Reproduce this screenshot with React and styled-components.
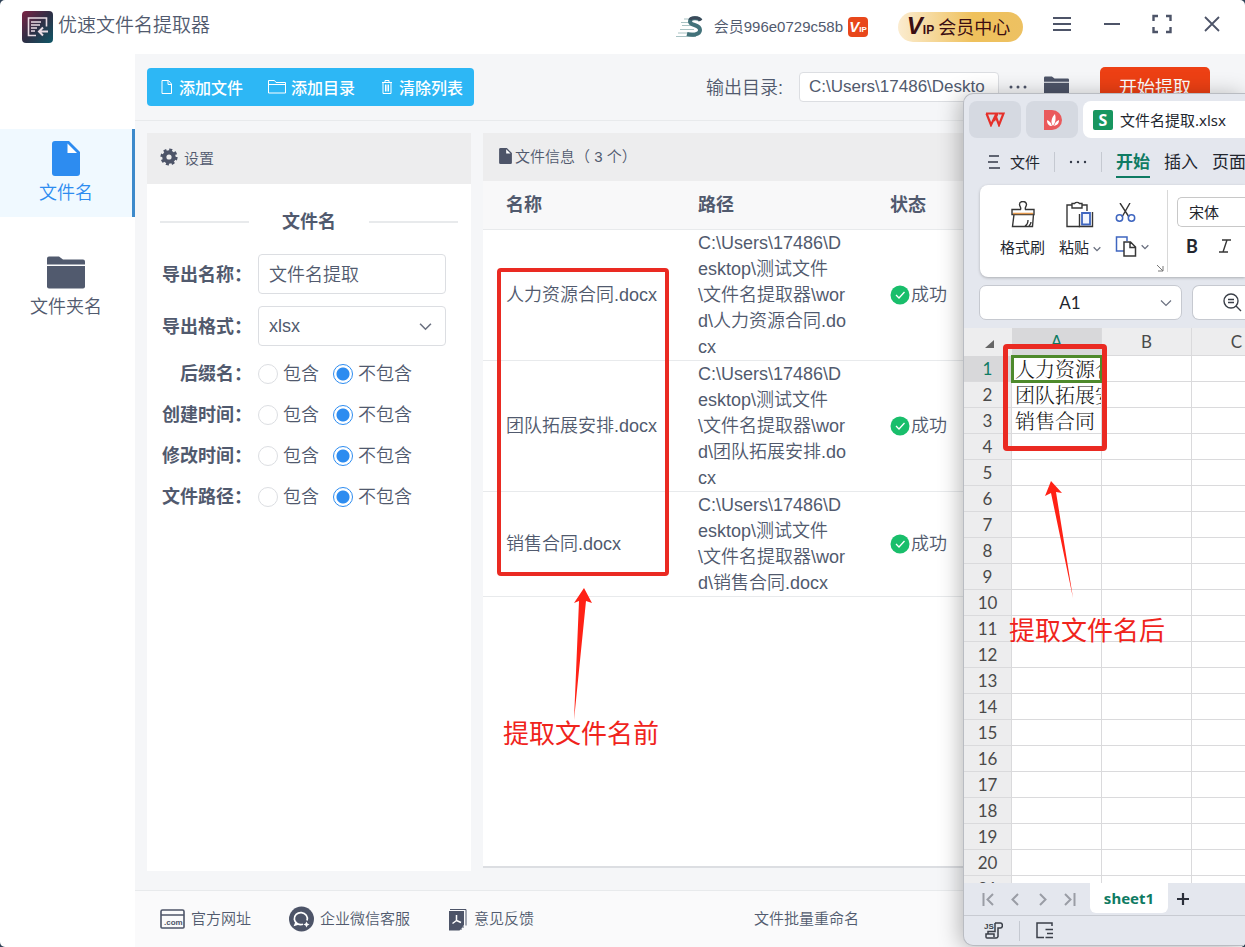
import React from 'react';
import styled, { createGlobalStyle } from 'styled-components';

const FILES = [
  { name: '人力资源合同.docx', path: 'C:\\Users\\17486\\Desktop\\测试文件\\文件名提取器\\word\\人力资源合同.docx' },
  { name: '团队拓展安排.docx', path: 'C:\\Users\\17486\\Desktop\\测试文件\\文件名提取器\\word\\团队拓展安排.docx' },
  { name: '销售合同.docx', path: 'C:\\Users\\17486\\Desktop\\测试文件\\文件名提取器\\word\\销售合同.docx' },
];

const RADIOS = [
  { id: 'suffix', label: '后缀名' },
  { id: 'created', label: '创建时间' },
  { id: 'modified', label: '修改时间' },
  { id: 'filepath', label: '文件路径' },
];

const CELLS = ['人力资源合同', '团队拓展安排', '销售合同'];
const ROWS = Array.from({ length: 21 }, (_, i) => i + 1);

function FileIcon({ w, h }) {
  return (
    <svg width={w} height={h} viewBox="0 0 28 35" fill="currentColor" aria-hidden="true">
      <path d="M3 0h14l11 11v21a3 3 0 0 1-3 3H3a3 3 0 0 1-3-3V3a3 3 0 0 1 3-3z" />
      <path d="M15.500 2.500v9.500h9.500z" fill="#fff" />
    </svg>
  );
}

function FolderIcon({ w, h }) {
  return (
    <svg width={w} height={h} viewBox="0 0 38 32" fill="currentColor" aria-hidden="true">
      <path d="M0 8V2a2 2 0 0 1 2-2h10l4 3h20a2 2 0 0 1 2 2v3z" />
      <path d="M0 9.500h38V30a2 2 0 0 1-2 2H2a2 2 0 0 1-2-2z" />
    </svg>
  );
}

function Chevron({ size = 12, width = 1.5 }) {
  return (
    <svg width={size} height={size} viewBox="0 0 12 12" fill="none" stroke="#6b7180" strokeWidth={width} aria-hidden="true">
      <path d="M1 3.500l5 5 5-5" />
    </svg>
  );
}

function Header() {
  return (
    <TopBar>
      <svg width="31" height="32" viewBox="0 0 31 32" aria-hidden="true">
        <defs>
          <linearGradient id="logo" x1="0" y1="0" x2="1" y2="1">
            <stop offset="0" stopColor="#7c2345" />
            <stop offset="0.5" stopColor="#2e2f45" />
            <stop offset="1" stopColor="#0f5868" />
          </linearGradient>
        </defs>
        <rect width="31" height="32" rx="4" fill="url(#logo)" />
        <g fill="none" stroke="#e9dce4" strokeWidth="1.6">
          <path d="M14 24.500H6.500V7H24.500v8.500" />
          <path d="M9 11h10M9 14h9M9 17h6M9 20h4" strokeWidth="1.3" />
          <path d="M26 20.500h-8.500M21 16.500l-4 4 4 4" strokeWidth="2" />
        </g>
      </svg>
      <AppTitle>优速文件名提取器</AppTitle>
      <Account>
        <svg width="28" height="24" viewBox="0 0 28 24" aria-hidden="true">
          <path d="M8 4h10M5 7.500h9M6 10.500h10M4 14.500h14M2 18h16M0 21.500h20" stroke="#a9c3c4" strokeWidth="1.200" />
          <path d="M24.500 5.500C23 2.500 14 2 14 6.500c0 4.500 10 2.500 10 8.500 0 5.500-9 5-13 4" fill="none" stroke="#42727a" strokeWidth="4" />
          <path d="M14 5c1-3 9-3 11 .5" fill="none" stroke="#3b4a5a" strokeWidth="3" />
        </svg>
        <span>会员996e0729c58b</span>
        <VipBadge><b>V</b><small>IP</small></VipBadge>
      </Account>
      <VipButton type="button"><VipMark><b>V</b><small>IP</small></VipMark>会员中心</VipButton>
      <WindowButtons>
        <IconButton type="button" aria-label="菜单">
          <svg width="20" height="20" viewBox="0 0 20 20" stroke="currentColor" strokeWidth="2"><path d="M1 4h18M1 10h18M1 16h18" /></svg>
        </IconButton>
        <IconButton type="button" aria-label="最小化">
          <svg width="20" height="20" viewBox="0 0 20 20" stroke="currentColor" strokeWidth="2"><path d="M2 10h16" /></svg>
        </IconButton>
        <IconButton type="button" aria-label="全屏">
          <svg width="20" height="20" viewBox="0 0 20 20" fill="none" stroke="currentColor" strokeWidth="2.400"><path d="M1.500 7V2H6M14 2h4.500v5M18.500 13v5H14M6 18H1.500v-5" /></svg>
        </IconButton>
        <IconButton type="button" aria-label="关闭">
          <svg width="20" height="20" viewBox="0 0 20 20" stroke="currentColor" strokeWidth="1.800"><path d="M3 3l14 14M17 3L3 17" /></svg>
        </IconButton>
      </WindowButtons>
    </TopBar>
  );
}

function Toolbar() {
  return (
    <ToolRow>
      <ToolGroup>
        <ToolButton type="button">
          <svg width="14" height="16" viewBox="0 0 14 16" fill="none" stroke="currentColor"><path d="M2 1.500h6.500l3 3.500v9.500H2zM8 1.500V5.500h3.500" /></svg>
          添加文件
        </ToolButton>
        <ToolButton type="button">
          <svg width="18" height="16" viewBox="0 0 18 16" fill="none" stroke="currentColor"><path d="M.5 14V1.500h6l1.500 2h9.500V14zM.5 5.500h17" /></svg>
          添加目录
        </ToolButton>
        <ToolButton type="button">
          <svg width="14" height="16" viewBox="0 0 14 16" fill="none" stroke="currentColor"><path d="M2 3.500h10M5 3V1.500h4V3M3 4v10.500h8V4M5.500 5.500v7M7 5.500v7M8.500 5.500v7" /></svg>
          清除列表
        </ToolButton>
      </ToolGroup>
      <OutLabel htmlFor="outdir">输出目录:</OutLabel>
      <OutInput id="outdir" defaultValue="C:\Users\17486\Deskto" />
      <MoreButton type="button" aria-label="更多">
        <svg width="18" height="4" viewBox="0 0 18 4" fill="currentColor"><circle cx="2" cy="2" r="1.500" /><circle cx="9" cy="2" r="1.500" /><circle cx="16" cy="2" r="1.500" /></svg>
      </MoreButton>
      <IconButton type="button" aria-label="打开目录"><FolderIcon w={25} h={22} /></IconButton>
      <StartButton type="button">开始提取</StartButton>
    </ToolRow>
  );
}

function Settings() {
  return (
    <SettingsPanel>
      <PanelHead $tall>
        <svg width="18" height="18" viewBox="0 0 18 18" aria-hidden="true">
          <circle cx="9" cy="9" r="4.700" fill="none" stroke="#4d5468" strokeWidth="4.200" />
          <circle cx="9" cy="9" r="7.300" fill="none" stroke="#4d5468" strokeWidth="2.600" strokeDasharray="3 2.730" />
        </svg>
        设置
      </PanelHead>
      <Form>
        <SectionTitle>文件名</SectionTitle>
        <Field>
          <FieldLabel htmlFor="exportName">导出名称：</FieldLabel>
          <TextInput id="exportName" defaultValue="文件名提取" />
        </Field>
        <Field>
          <FieldLabel htmlFor="exportType">导出格式：</FieldLabel>
          <SelectBox>
            <Select id="exportType" defaultValue="xlsx"><option>xlsx</option></Select>
            <Chevron size={13} />
          </SelectBox>
        </Field>
        <RadioList>
          {RADIOS.map((r) => (
            <RadioField key={r.id}>
              <FieldLabel as="span" id={r.id}>{r.label}：</FieldLabel>
              <RadioGroup role="radiogroup" aria-labelledby={r.id}>
                <RadioLabel><Radio type="radio" name={r.id} />包含</RadioLabel>
                <RadioLabel><Radio type="radio" name={r.id} defaultChecked />不包含</RadioLabel>
              </RadioGroup>
            </RadioField>
          ))}
        </RadioList>
      </Form>
    </SettingsPanel>
  );
}

function FileList() {
  return (
    <FilesPanel>
      <PanelHead>
        <HeadFile><FileIcon w={13} h={16} /></HeadFile>
        文件信息（ 3 个）
      </PanelHead>
      <FileTable>
        <colgroup><col width="192" /><col width="192" /><col /></colgroup>
        <thead>
          <tr><th>名称</th><th>路径</th><th>状态</th></tr>
        </thead>
        <tbody>
          {FILES.map((f) => (
            <tr key={f.name}>
              <td>{f.name}</td>
              <td>{f.path}</td>
              <td>
                <Status>
                  <svg width="20" height="20" viewBox="0 0 20 20" aria-hidden="true">
                    <circle cx="10" cy="10" r="9.500" fill="#19be6b" />
                    <path d="M6 10l3 3 5.500-6" fill="none" stroke="#fff" strokeWidth="1.300" />
                  </svg>
                  成功
                </Status>
              </td>
            </tr>
          ))}
        </tbody>
      </FileTable>
      <BeforeBox />
      <BeforeArrow width="40" height="132" viewBox="0 0 40 132" aria-hidden="true">
        <path d="M20 0l8 15-6-2-12 119L15 13l-5 2z" fill="#ff2216" />
      </BeforeArrow>
      <BeforeNote>提取文件名前</BeforeNote>
    </FilesPanel>
  );
}

function Footer() {
  return (
    <FooterBar>
      <FootLink href="#site">
        <svg width="25" height="20" viewBox="0 0 25 20" aria-hidden="true">
          <path d="M1 2.500a1.500 1.500 0 0 1 1.500-1.500h20A1.500 1.500 0 0 1 24 2.500V18a1 1 0 0 1-1 1H2a1 1 0 0 1-1-1zM1 6h23" fill="none" stroke="#4d5468" strokeWidth="1.600" />
          <text x="4" y="16" fontSize="8" fontWeight="bold" fontFamily="Liberation Sans" fill="#4d5468">.com</text>
        </svg>
        官方网址
      </FootLink>
      <FootLink href="#service">
        <svg width="25" height="26" viewBox="0 0 25 26" aria-hidden="true">
          <circle cx="12.500" cy="13" r="12.500" fill="#4d5468" />
          <path d="M18 14.500a6.500 6 0 1 0-4 3.800M7 16.500L6 19l3.500-1" fill="none" stroke="#fff" strokeWidth="1.700" />
          <path d="M17.500 15.500l1 2 2 1-2 1-1 2-1-2-2-1 2-1z" fill="#fff" />
        </svg>
        企业微信客服
      </FootLink>
      <FootLink href="#feedback">
        <svg width="20" height="23" viewBox="0 0 20 23" aria-hidden="true">
          <path d="M2 1.500h16v16" fill="none" stroke="#4d5468" />
          <path d="M1 3h15v14l-4.500 5.500H1z" fill="#4d5468" />
          <path d="M8.500 7v5.500M8.500 12.500l-4 3M8.500 12.500l4.500 2" stroke="#fff" strokeWidth="1.500" />
          <path d="M13 22v-3h3" fill="none" stroke="#4d5468" />
        </svg>
        意见反馈
      </FootLink>
      <FootLink href="#rename" $push>文件批量重命名</FootLink>
    </FooterBar>
  );
}

function Spreadsheet() {
  return (
    <SheetWindow>
      <TabStrip>
        <DocTab type="button" aria-label="WPS">
          <svg width="20" height="15" viewBox="0 0 20 15" fill="none" stroke="#e5302a" strokeWidth="2.200"><path d="M1 1.500h11.500L9 9M1.500 1.500L6 13l4.500-9.500L14 13l4.500-11.500h-4.500" /></svg>
        </DocTab>
        <DocTab type="button" aria-label="稻壳">
          <svg width="19" height="20" viewBox="0 0 19 20"><path d="M1 0h8a10 10 0 0 1 0 20H1z" fill="#ea5a5c" /><path d="M10 16C7 12 9 7 12 4c1 4 1 8-2 12zM9 16c-1-4-3-5-5-6 0 4 2 6 5 6zM11 16c4-1 5-3 5-6-3 1-4 3-5 6z" fill="#fff" /></svg>
        </DocTab>
        <DocTab type="button" $active>
          <DocBadge>S</DocBadge>
          文件名提取.xlsx
        </DocTab>
      </TabStrip>
      <MenuRow>
        <MenuButton type="button">
          <svg width="12" height="16" viewBox="0 0 12 16" stroke="#333a48" strokeWidth="1.300"><path d="M1 2h10M0 8h10M1 14h11" /></svg>
          文件
        </MenuButton>
        <MenuSplit $gap={14} />
        <MenuButton type="button" aria-label="更多"><svg width="18" height="4" viewBox="0 0 18 4" fill="#333a48"><circle cx="2" cy="2" r="1.200" /><circle cx="9" cy="2" r="1.200" /><circle cx="16" cy="2" r="1.200" /></svg></MenuButton>
        <MenuSplit $gap={14} />
        <MenuTab type="button" $active>开始</MenuTab>
        <MenuTab type="button">插入</MenuTab>
        <MenuTab type="button">页面</MenuTab>
      </MenuRow>
      <Ribbon>
        <Clipboard>
          <BigTool type="button">
            <svg width="24" height="27" viewBox="0 0 24 27" fill="none" stroke="#363636" strokeWidth="1.400"><path d="M1 8.500h8.500c1-2-1-3-1-5a3.500 3 0 0 1 7 0c0 2-2 3-1 5H23v5H1zM3 13.500L1.500 25.500h20l1-12M14 25c2-1 3-3 3-6M18 25c1-1 2-2 2-4" /><path d="M2 12.500h20" stroke="#e59a4e" /></svg>
            格式刷
          </BigTool>
          <BigTool type="button">
            <svg width="28" height="27" viewBox="0 0 28 27" fill="none" stroke="#363636" strokeWidth="1.400"><path d="M6 4H1v21.500h13M16 4h5v6M6 2.500h2.500a3 2.500 0 0 1 5 0H16V7H6z" /><path d="M16 12h8v11.500h-8z" fill="#f2f6ff" stroke="#3f66c0" strokeWidth="1.800" /><path d="M13.500 13v12.500h13V11" /></svg>
            <span>粘贴<Chevron size={8} width={2} /></span>
          </BigTool>
          <SmallTools>
            <button type="button" aria-label="剪切">
              <svg width="21" height="19" viewBox="0 0 21 19" fill="none"><path d="M5 0l9 14M15 0L7 14" stroke="#363636" strokeWidth="1.400" /><circle cx="4.500" cy="15" r="3.200" stroke="#3f66c0" strokeWidth="1.500" /><circle cx="16.500" cy="15" r="3.200" stroke="#3f66c0" strokeWidth="1.500" /></svg>
            </button>
            <button type="button" aria-label="复制">
              <svg width="22" height="21" viewBox="0 0 22 21" fill="none"><path d="M9 15H1.500V1H12v4" stroke="#3f66c0" strokeWidth="1.500" /><path d="M9 6h6.500l5 5v9H9zM15 6v5.500h5" stroke="#363636" strokeWidth="1.500" /></svg>
              <Chevron size={8} width={2} />
            </button>
          </SmallTools>
          <Launcher width="8" height="8" viewBox="0 0 8 8" fill="none" stroke="#777"><path d="M1 1l6 6M7 2v5H2" /></Launcher>
        </Clipboard>
        <FontTools>
          <FontSelect aria-label="字体" defaultValue="宋体"><option>宋体</option></FontSelect>
          <FontButtons>
            <button type="button"><b>B</b></button>
            <button type="button" aria-label="斜体">
              <svg width="14" height="14" viewBox="0 0 14 14" fill="none" stroke="#363636" strokeWidth="1.400"><path d="M4 1h9M1 13h9M9 1L5 13" /></svg>
            </button>
          </FontButtons>
        </FontTools>
      </Ribbon>
      <FormulaRow>
        <NameBox>
          <input aria-label="名称框" defaultValue="A1" />
          <Chevron size={12} width={1.2} />
        </NameBox>
        <FormulaBox>
          <svg width="19" height="19" viewBox="0 0 19 19" fill="none" stroke="#3a3f48" strokeWidth="1.400"><circle cx="8" cy="8" r="7" /><path d="M13 13l5 5M5 6.500h6M5 9.500h6" /></svg>
        </FormulaBox>
      </FormulaRow>
      <GridArea>
        <Grid>
          <colgroup><col width="48" /><col width="90" /><col width="90" /><col width="90" /></colgroup>
          <thead>
            <tr>
              <th><Corner width="9" height="8" viewBox="0 0 9 8" aria-hidden="true"><path d="M9 0v8H0z" fill="#666" /></Corner></th>
              <GridHead scope="col" $on>A</GridHead>
              <GridHead scope="col">B</GridHead>
              <GridHead scope="col">C</GridHead>
            </tr>
          </thead>
          <tbody>
            {ROWS.map((n) => (
              <tr key={n}>
                <GridHead scope="row" $on={n === 1}>{n}</GridHead>
                <GridCell $selected={n === 1}>{CELLS[n - 1]}</GridCell>
                <GridCell />
                <GridCell />
              </tr>
            ))}
          </tbody>
        </Grid>
      </GridArea>
      <SheetTabs>
        <NavButton type="button" aria-label="第一个"><svg width="13" height="13" viewBox="0 0 13 13"><path d="M1.500 0v13M11 1L5.500 6.500 11 12" /></svg></NavButton>
        <NavButton type="button" aria-label="上一个"><svg width="13" height="13" viewBox="0 0 13 13"><path d="M9 1L3.500 6.500 9 12" /></svg></NavButton>
        <NavButton type="button" aria-label="下一个"><svg width="13" height="13" viewBox="0 0 13 13"><path d="M4 1l5.500 5.500L4 12" /></svg></NavButton>
        <NavButton type="button" aria-label="最后一个"><svg width="13" height="13" viewBox="0 0 13 13"><path d="M2 1l5.500 5.500L2 12M11.500 0v13" /></svg></NavButton>
        <SheetTab type="button">sheet1</SheetTab>
        <AddButton type="button" aria-label="新建"><svg width="12" height="12" viewBox="0 0 12 12" stroke="#2b2f3a" strokeWidth="2.200"><path d="M0 6h12M6 0v12" /></svg></AddButton>
      </SheetTabs>
      <StatusRow>
        <svg width="19" height="17" viewBox="0 0 19 17" fill="none" stroke="#3a3f48" strokeWidth="1.500" aria-hidden="true">
          <text x="0" y="7" fontSize="8" fontWeight="bold" fontFamily="Liberation Sans" fill="#3a3f48" stroke="none">JS</text>
          <path d="M11 1h5.500a1.500 2 0 0 1 0 5H14v8.500a2 2 0 0 1-2 1.500H3a1 1 0 0 1-1-1v-3h8v3M4 12V9.500h7V1" />
        </svg>
        <MenuSplit $gap={16} />
        <svg width="18" height="17" viewBox="0 0 18 17" fill="none" stroke="#3a3f48" strokeWidth="1.500" aria-hidden="true"><path d="M8 15.500H1V1h15v3M9.500 7.500H17M11 11.500h6M9.500 15.500H17" /></svg>
      </StatusRow>
      <AfterBox />
      <AfterArrow width="40" height="118" viewBox="0 0 40 118" aria-hidden="true">
        <path d="M13 0l11 12-6-1 17 106L13 12l-6 3z" fill="#ff2216" />
      </AfterArrow>
      <AfterNote>提取文件名后</AfterNote>
    </SheetWindow>
  );
}

function App() {
  return (
    <>
      <GlobalStyle />
      <Page>
        <Header />
        <Body>
          <Sidebar>
            <SideItem href="#file" $active><FileIcon w={28} h={35} />文件名</SideItem>
            <SideItem href="#folder"><FolderIcon w={38} h={35} />文件夹名</SideItem>
          </Sidebar>
          <Main>
            <Toolbar />
            <Panels>
              <Settings />
              <FileList />
            </Panels>
            <Footer />
          </Main>
        </Body>
        <Spreadsheet />
      </Page>
    </>
  );
}

const GlobalStyle = createGlobalStyle`
  *, *::before, *::after {
    box-sizing: border-box;
  }
  body {
    margin: 0;
    background: #2f4257;
    font-family: "Liberation Sans", "Noto Sans CJK SC", sans-serif;
    font-weight: 350;
    color: #515a6e;
  }
  button, input, select {
    font: inherit;
    color: inherit;
  }
  button {
    padding: 0;
    border: none;
    background: none;
    cursor: pointer;
  }
  svg {
    flex: none;
  }
`;

const Page = styled.div`
  position: relative;
  display: flex;
  flex-direction: column;
  height: 100vh;
  overflow: hidden;
  background: #fff;
  border-radius: 5px;
`;

const TopBar = styled.header`
  display: flex;
  align-items: center;
  flex: none;
  height: 54px;
  padding: 0 23px 0 22px;
`;

const AppTitle = styled.h1`
  margin: 0 auto 2px 5px;
  font-size: 19px;
  font-weight: 350;
  line-height: 24px;
`;

const Account = styled.div`
  display: flex;
  align-items: center;
  gap: 5px;
  margin-right: 30px;
  font-size: 15px;
  line-height: 18px;

  svg {
    margin-right: 5px;
  }
`;

const VipBadge = styled.span`
  display: flex;
  align-items: baseline;
  justify-content: center;
  width: 20px;
  height: 20px;
  border-radius: 4px;
  background: #e8471b;
  color: #fff;
  line-height: 20px;

  b {
    font-size: 15px;
    font-style: italic;
  }
  small {
    font-size: 8px;
    font-weight: bold;
  }
`;

const VipButton = styled.button`
  display: flex;
  align-items: center;
  justify-content: center;
  gap: 4px;
  width: 125px;
  height: 30px;
  padding: 0 4px 2px 0;
  border-radius: 15px;
  background: linear-gradient(90deg, #fbecd0, #efc15c 60%, #edc162);
  color: #3a0d12;
  font-size: 18px;
  font-weight: 400;
`;

const VipMark = styled.span`
  display: flex;
  align-items: baseline;

  b {
    font-size: 24px;
    font-style: italic;
    line-height: 26px;
  }
  small {
    font-size: 12px;
    font-weight: bold;
  }
`;

const WindowButtons = styled.div`
  display: flex;
  gap: 30px;
  margin: 0 0 6px 29px;
`;

const IconButton = styled.button`
  display: flex;
  align-items: center;
  color: #4d5468;
`;

const Body = styled.div`
  display: flex;
  flex: 1;
  min-height: 0;
`;

const Sidebar = styled.nav`
  display: flex;
  flex-direction: column;
  flex: none;
  gap: 26px;
  width: 135px;
  padding-top: 75px;
`;

const SideItem = styled.a`
  display: flex;
  flex-direction: column;
  align-items: center;
  gap: 4px;
  height: 88px;
  padding-top: 12px;
  border-right: 3px solid ${(p) => (p.$active ? '#3d8acb' : 'transparent')};
  background: ${(p) => (p.$active ? '#f0f9ff' : 'transparent')};
  color: ${(p) => (p.$active ? '#2d8cf0' : '#515a6e')};
  font-size: 18px;
  line-height: 26px;
  text-decoration: none;
`;

const Main = styled.main`
  display: flex;
  flex-direction: column;
  flex: 1;
  min-width: 0;
  background: #f5f6f8;
`;

const ToolRow = styled.div`
  display: flex;
  align-items: center;
  flex: none;
  height: 67px;
  padding: 0 35px 0 12px;
  border-bottom: 1px solid #e8eaec;
  font-size: 18px;
`;

const ToolGroup = styled.div`
  display: flex;
  align-items: center;
  justify-content: space-between;
  width: 327px;
  height: 38px;
  padding: 0 11px 0 13px;
  margin-right: auto;
  border-radius: 4px;
  background: #2db7f5;
  color: #fff;
`;

const ToolButton = styled.button`
  display: flex;
  align-items: center;
  gap: 5px;
  font-size: 16px;
  font-weight: 500;
`;

const OutLabel = styled.label`
  margin-right: 16px;
  padding-bottom: 3px;
`;

const OutInput = styled.input`
  width: 200px;
  height: 30px;
  padding: 0 9px;
  border: 1px solid #dcdee2;
  border-radius: 4px;
  background: #fff;
  font-size: 17px;
`;

const MoreButton = styled(IconButton)`
  margin: 0 17px 0 10px;
`;

const StartButton = styled.button`
  width: 110px;
  height: 40px;
  margin-left: 31px;
  padding-bottom: 3px;
  border-radius: 5px;
  background: #ed4014;
  color: #fff;
  font-weight: 400;
`;

const Panels = styled.div`
  display: flex;
  flex: 1;
  gap: 12px;
  min-height: 0;
  padding: 12px 0 19px 12px;
`;

const SettingsPanel = styled.section`
  flex: none;
  width: 324px;
  background: #fff;
`;

const FilesPanel = styled.section`
  position: relative;
  flex: 1;
  min-width: 0;
  background: #fff;
  border-bottom: 2px solid #dcdee2;
  margin-bottom: 3px;
`;

const PanelHead = styled.h2`
  display: flex;
  align-items: center;
  gap: ${(p) => (p.$tall ? 6 : 3)}px;
  height: ${(p) => (p.$tall ? 51 : 48)}px;
  margin: 0;
  padding: 0 13px 3px;
  background: #ededee;
  font-size: 15px;
  font-weight: 350;
`;

const HeadFile = styled.span`
  display: flex;
  margin-left: 3px;
  color: #4d5468;
`;

const Form = styled.form`
  display: flex;
  flex-direction: column;
  gap: 12px;
  padding: 24px 13px;
  font-size: 18px;
`;

const SectionTitle = styled.h3`
  display: flex;
  align-items: center;
  justify-content: space-between;
  margin: 0 0 6px;
  font-size: 18px;
  line-height: 28px;

  &::before, &::after {
    content: "";
    width: 89px;
    height: 2px;
    background: #e8eaec;
  }
`;

const Field = styled.div`
  display: grid;
  grid-template-columns: 92px 188px;
  column-gap: 6px;
  align-items: center;
`;

const RadioList = styled.div`
  margin-top: -5px;
`;

const RadioField = styled(Field)`
  height: 41px;
`;

const FieldLabel = styled.label`
  padding-bottom: 3px;
  text-align: right;
  font-weight: bold;
  white-space: nowrap;
`;

const TextInput = styled.input`
  width: 100%;
  height: 40px;
  padding: 0 10px 2px;
  border: 1px solid #dcdee2;
  border-radius: 4px;
  background: #fff;
`;

const SelectBox = styled.div`
  display: flex;
  align-items: center;
  height: 40px;
  padding: 0 13px 0 10px;
  border: 1px solid #dcdee2;
  border-radius: 4px;
`;

const Select = styled.select`
  flex: 1;
  appearance: none;
  border: none;
  background: none;
`;

const RadioGroup = styled.div`
  display: flex;
  gap: 14px;
`;

const RadioLabel = styled.label`
  display: flex;
  align-items: center;
  gap: 5px;
  line-height: 22px;
`;

const Radio = styled.input`
  appearance: none;
  width: 20px;
  height: 20px;
  margin: 0;
  border: 1px solid #dcdee2;
  border-radius: 50%;

  &:checked {
    border-color: #2d8cf0;
    background: radial-gradient(circle, #2d8cf0 6px, #fff 7px);
  }
`;

const FileTable = styled.table`
  width: 100%;
  table-layout: fixed;
  border-collapse: separate;
  border-spacing: 0;
  font-size: 18px;
  line-height: 26px;

  th, td {
    padding: 0 17px 0 23px;
    border-bottom: 1px solid #e8eaec;
    text-align: left;
    word-break: break-all;
  }
  th {
    height: 49px;
    background: #f8f8f9;
  }
`;

const Status = styled.span`
  display: flex;
  align-items: center;
  gap: 1px;
`;

const RedBox = styled.div`
  position: absolute;
  border: 4px solid #ea2a22;
  border-radius: 4px;
  pointer-events: none;
`;

const Note = styled.p`
  position: absolute;
  margin: 0;
  color: #f0241c;
  font-size: 26px;
  font-weight: 400;
  line-height: 32px;
  white-space: nowrap;
`;

const BeforeBox = styled(RedBox)`
  left: 14px;
  top: 135px;
  width: 172px;
  height: 308px;
`;

const BeforeArrow = styled.svg`
  position: absolute;
  left: 81px;
  top: 455px;
`;

const BeforeNote = styled(Note)`
  left: 20px;
  top: 585px;
`;

const FooterBar = styled.footer`
  display: flex;
  align-items: center;
  flex: none;
  gap: 38px;
  height: 57px;
  padding: 0 25px;
  border-top: 1px solid #e8eaec;
  background: #fafafb;
`;

const FootLink = styled.a`
  display: flex;
  align-items: center;
  gap: 6px;
  margin-left: ${(p) => (p.$push ? 182 : 0)}px;
  color: inherit;
  font-size: 15px;
  line-height: 18px;
  text-decoration: none;
`;

const SheetWindow = styled.section`
  position: absolute;
  left: 963px;
  top: 93px;
  right: 0;
  bottom: 1px;
  display: flex;
  flex-direction: column;
  overflow: clip;
  border: 1px solid #b9bcc2;
  border-right: none;
  border-radius: 10px 0 0 10px;
  background: #e4e7ee;
  box-shadow: -3px 2px 22px rgba(0, 0, 0, 0.28);
  color: #22262e;
  font-family: "Noto Sans", "Noto Sans CJK SC", sans-serif;
  font-weight: 400;
  font-size: 15px;
`;

const TabStrip = styled.div`
  display: flex;
  flex: none;
  gap: 5px;
  height: 44px;
  padding: 7px 0 0 5px;
`;

const DocTab = styled.button`
  display: flex;
  align-items: center;
  justify-content: ${(p) => (p.$active ? 'flex-start' : 'center')};
  flex: ${(p) => (p.$active ? '1' : 'none')};
  gap: 7px;
  width: 52px;
  height: 37px;
  padding: ${(p) => (p.$active ? '0 0 0 10px' : '0')};
  border-radius: ${(p) => (p.$active ? '8px 0 0 8px' : '8px')};
  background: ${(p) => (p.$active ? '#fff' : '#d5d9e1')};
  white-space: nowrap;
`;

const DocBadge = styled.span`
  width: 20px;
  height: 20px;
  border-radius: 2px;
  background: #17965f;
  color: #fff;
  font-weight: bold;
  font-size: 16px;
  line-height: 20px;
  text-align: center;
`;

const MenuRow = styled.div`
  display: flex;
  align-items: center;
  flex: none;
  height: 47px;
  padding-left: 24px;
`;

const MenuButton = styled.button`
  display: flex;
  align-items: center;
  gap: 10px;
  white-space: nowrap;
`;

const MenuSplit = styled.span`
  flex: none;
  width: 1px;
  height: 20px;
  margin: 0 ${(p) => p.$gap}px;
  background: #c5c9d1;
`;

const MenuTab = styled.button`
  flex: none;
  height: 32px;
  margin-right: 14px;
  border-bottom: 2px solid ${(p) => (p.$active ? '#0f7b63' : 'transparent')};
  color: ${(p) => (p.$active ? '#0f7b63' : 'inherit')};
  font-size: 17px;
  font-weight: ${(p) => (p.$active ? 'bold' : 400)};
`;

const Ribbon = styled.div`
  display: flex;
  flex: none;
  height: 92px;
  margin-left: 16px;
  border-radius: 8px 0 0 8px;
  background: #fff;
  box-shadow: 0 1px 3px rgba(0, 0, 0, 0.25);
`;

const Clipboard = styled.div`
  position: relative;
  display: flex;
  flex: none;
  gap: 14px;
  width: 188px;
  margin: 5px 0;
  padding: 11px 0 0 20px;
  border-right: 1px solid #d8d8d8;
`;

const BigTool = styled.button`
  display: flex;
  flex-direction: column;
  align-items: center;
  gap: 8px;
  height: 60px;
  line-height: 22px;
  white-space: nowrap;

  span > svg {
    margin-left: 4px;
  }
`;

const SmallTools = styled.div`
  display: flex;
  flex-direction: column;
  align-items: flex-start;
  gap: 14px;
  padding-top: 2px;

  button {
    display: flex;
    align-items: center;
    gap: 4px;
  }
`;

const Launcher = styled.svg`
  position: absolute;
  right: 3px;
  bottom: 0;
`;

const FontTools = styled.div`
  flex: 1;
  min-width: 0;
  padding: 12px 0 0 9px;
`;

const FontSelect = styled.select`
  appearance: none;
  width: 100%;
  height: 30px;
  padding: 0 11px;
  border: 1px solid #c8c8c8;
  border-right: none;
  border-radius: 5px 0 0 5px;
  background: #fff;
`;

const FontButtons = styled.div`
  display: flex;
  gap: 20px;
  padding: 7px 0 0 9px;
  font-family: Lato, sans-serif;
  font-size: 18px;
  line-height: 24px;
`;

const FormulaRow = styled.div`
  display: flex;
  flex: none;
  gap: 10px;
  padding: 8px 0 8px 15px;
`;

const NameBox = styled.div`
  display: flex;
  align-items: center;
  width: 203px;
  height: 35px;
  padding-right: 9px;
  border: 1px solid #c6c9d0;
  border-radius: 7px;
  background: #fff;

  input {
    flex: 1;
    min-width: 0;
    border: none;
    background: none;
    text-align: center;
    font-family: Lato, sans-serif;
    font-size: 17px;
  }
`;

const FormulaBox = styled.div`
  display: flex;
  align-items: center;
  flex: 1;
  padding-left: 30px;
  border: 1px solid #c6c9d0;
  border-right: none;
  border-radius: 7px 0 0 7px;
  background: #fff;
`;

const GridArea = styled.div`
  flex: 1;
  min-height: 0;
  overflow: hidden;
  background: #fff;
`;

const Grid = styled.table`
  width: 318px;
  table-layout: fixed;
  border-collapse: separate;
  border-spacing: 0;

  th {
    background: #ededee;
  }
  thead th {
    height: 28px;
  }
`;

const GridHead = styled.th`
  height: 26px;
  padding: 0;
  border-right: 1px solid #dadadc;
  border-bottom: 1px solid #dadadc;
  && {
    background: ${(p) => (p.$on ? '#d8d8da' : '#ededee')};
  }
  color: ${(p) => (p.$on ? '#0f7b63' : '#4a4a4a')};
  font-family: Lato, sans-serif;
  font-size: 17px;
  font-weight: 400;
  line-height: 20px;
`;

const Corner = styled.svg`
  display: block;
  margin: 4px 0 0 20px;
`;

const GridCell = styled.td`
  height: 26px;
  padding: 0 0 0 3px;
  border-right: 1px solid #dadadc;
  border-bottom: 1px solid #dadadc;
  outline: ${(p) => (p.$selected ? '3px solid #4e8a2c' : 'none')};
  outline-offset: -2px;
  overflow: hidden;
  color: #111;
  font-family: "Noto Serif CJK SC", "Noto Sans CJK SC", sans-serif;
  font-size: 20px;
  font-weight: 300;
  line-height: 25px;
  white-space: nowrap;
`;

const SheetTabs = styled.div`
  display: flex;
  align-items: center;
  flex: none;
  height: 33px;
  padding-left: 18px;
  border-bottom: 1px solid #c8cbd2;
`;

const NavButton = styled.button`
  display: flex;
  margin-right: 14px;

  svg {
    fill: none;
    stroke: #9a9da5;
    stroke-width: 2px;
  }
`;

const SheetTab = styled.button`
  align-self: flex-start;
  width: 78px;
  height: 30px;
  border-radius: 0 0 6px 6px;
  background: #fff;
  color: #0f7b63;
  font-weight: bold;
`;

const AddButton = styled.button`
  display: flex;
  margin-left: 9px;
`;

const StatusRow = styled.div`
  display: flex;
  align-items: center;
  flex: none;
  height: 29px;
  padding-left: 20px;
`;

const AfterBox = styled(RedBox)`
  left: 39px;
  top: 250px;
  width: 104px;
  height: 107px;
  border-width: 5px;
`;

const AfterArrow = styled.svg`
  position: absolute;
  left: 74px;
  top: 387px;
`;

const AfterNote = styled(Note)`
  left: 45px;
  top: 520px;
`;

export default App;
